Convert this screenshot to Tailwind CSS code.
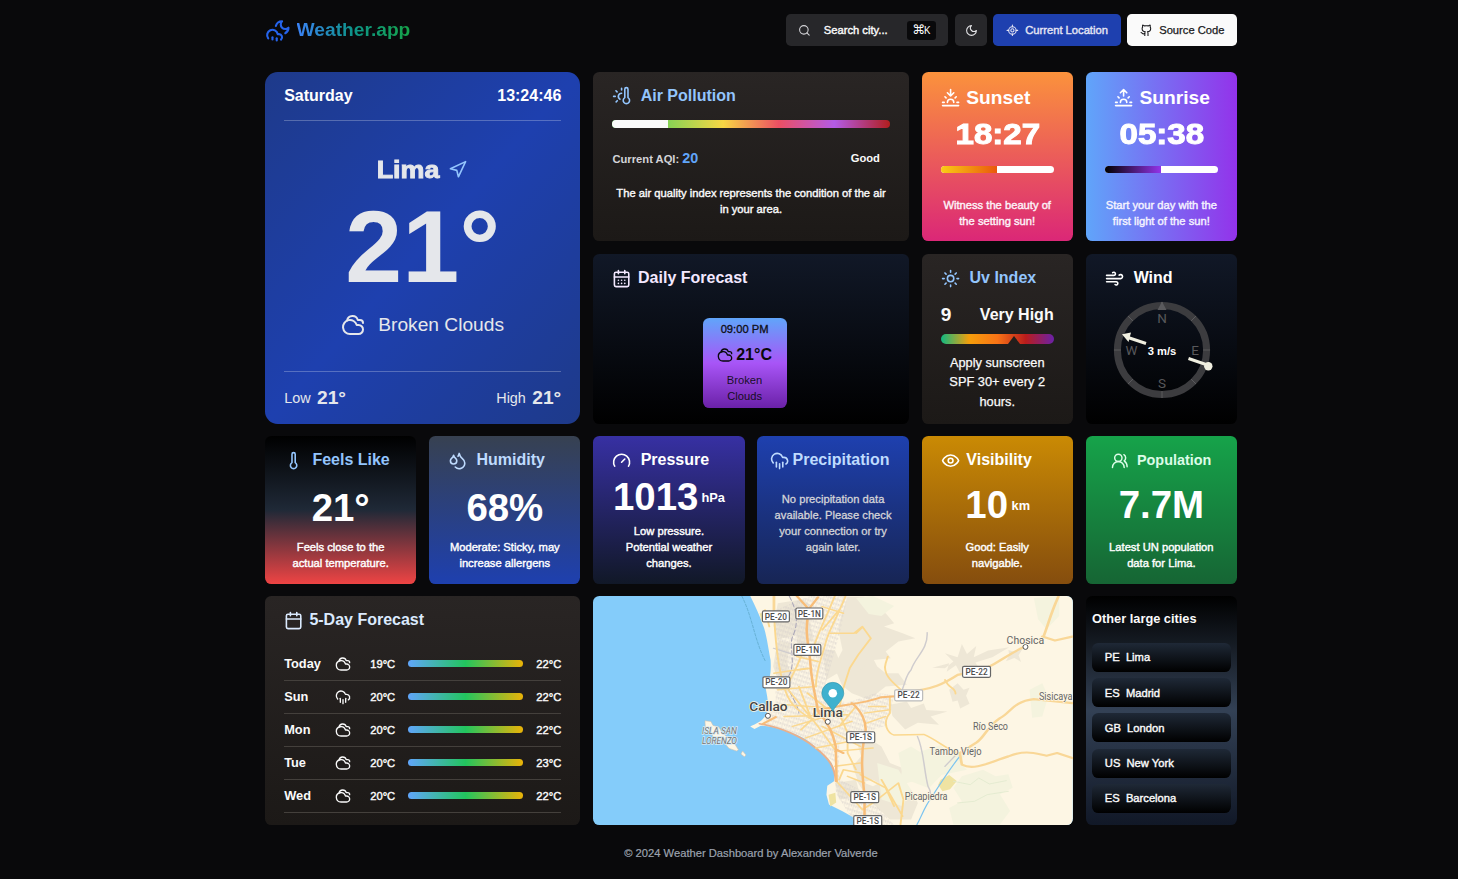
<!DOCTYPE html>
<html lang="en" class="text-[12.8px]">
<head>
<meta charset="utf-8">
<title>Weather.app</title>
<script src="https://cdn.jsdelivr.net/npm/@tailwindcss/browser@4"></script>
</head>
<body class="h-[879px] overflow-hidden bg-[#09090b] font-['Liberation_Sans',Arial,sans-serif] text-[#fafafa]">
<svg class="hidden">
  <symbol id="logo" viewBox="0 0 24 24"><path d="M10.188 8.5A6 6 0 0 1 16 4a1 1 0 0 0 6 6 6 6 0 0 1-3 5.197"/><path d="M11 20v2"/><path d="M3 20a5 5 0 1 1 8.9-4H13a3 3 0 0 1 2 5.24"/><path d="M7 19v2"/></symbol>
  <symbol id="cloudy" viewBox="0 0 24 24"><path d="M17.5 21H9a7 7 0 1 1 6.71-9h1.79a4.5 4.5 0 1 1 0 9Z"/><path d="M22 10a3 3 0 0 0-3-3h-2.207a5.502 5.502 0 0 0-10.702.5"/></symbol>
  <symbol id="rain" viewBox="0 0 24 24"><path d="M4 14.899A7 7 0 1 1 15.71 8h1.79a4.5 4.5 0 0 1 2.5 8.242"/><path d="M16 14v6"/><path d="M8 14v6"/><path d="M12 16v6"/></symbol>
  <symbol id="thermo-sun" viewBox="0 0 24 24"><path d="M12 9a4 4 0 0 0-2 7.5"/><path d="M12 3v2"/><path d="m6.6 18.4-1.4 1.4"/><path d="M20 4v10.54a4 4 0 1 1-4 0V4a2 2 0 0 1 4 0Z"/><path d="M4 13H2"/><path d="M6.34 7.34 4.93 5.93"/></symbol>
  <symbol id="thermo" viewBox="0 0 24 24"><path d="M14 4v10.54a4 4 0 1 1-4 0V4a2 2 0 0 1 4 0Z"/></symbol>
  <symbol id="cal" viewBox="0 0 24 24"><path d="M8 2v4M16 2v4M3 10h18"/><rect x="3" y="4" width="18" height="18" rx="2"/></symbol>
  <symbol id="cal-days" viewBox="0 0 24 24"><path d="M8 2v4M16 2v4M3 10h18M8 14h.01M12 14h.01M16 14h.01M8 18h.01M12 18h.01M16 18h.01"/><rect x="3" y="4" width="18" height="18" rx="2"/></symbol>
  <symbol id="sunset" viewBox="0 0 24 24"><path d="M12 10V2M4.93 10.93l1.41 1.41M2 18h2M20 18h2M19.07 10.93l-1.41 1.41M22 22H2M16 6l-4 4-4-4M16 18a4 4 0 0 0-8 0"/></symbol>
  <symbol id="sunrise" viewBox="0 0 24 24"><path d="M12 2v8M4.93 10.93l1.41 1.41M2 18h2M20 18h2M19.07 10.93l-1.41 1.41M22 22H2M8 6l4-4 4 4M16 18a4 4 0 0 0-8 0"/></symbol>
  <symbol id="sun" viewBox="0 0 24 24"><circle cx="12" cy="12" r="4"/><path d="M12 2v2M12 20v2M4.93 4.93l1.41 1.41M17.66 17.66l1.41 1.41M2 12h2M20 12h2M6.34 17.66l-1.41 1.41M19.07 4.93l-1.41 1.41"/></symbol>
  <symbol id="wind" viewBox="0 0 24 24"><path d="M17.7 7.7a2.5 2.5 0 1 1 1.8 4.3H2"/><path d="M9.6 4.6A2 2 0 1 1 11 8H2"/><path d="M12.6 19.4A2 2 0 1 0 14 16H2"/></symbol>
  <symbol id="drops" viewBox="0 0 24 24"><path d="M7 16.3c2.2 0 4-1.83 4-4.05 0-1.16-.57-2.26-1.71-3.19S7.29 6.75 7 5.3c-.29 1.45-1.14 2.84-2.29 3.76S3 11.1 3 12.25c0 2.22 1.8 4.05 4 4.05z"/><path d="M12.56 6.6A10.97 10.97 0 0 0 14 3.02c.5 2.5 2 4.9 4 6.5s3 3.5 3 5.5a6.98 6.98 0 0 1-11.91 4.97"/></symbol>
  <symbol id="gauge" viewBox="0 0 24 24"><path d="m12 14 4-4"/><path d="M3.34 19a10 10 0 1 1 17.32 0"/></symbol>
  <symbol id="eye" viewBox="0 0 24 24"><path d="M2 12s3-7 10-7 10 7 10 7-3 7-10 7-10-7-10-7Z"/><circle cx="12" cy="12" r="3"/></symbol>
  <symbol id="users" viewBox="0 0 24 24"><path d="M18 21a8 8 0 0 0-16 0"/><circle cx="10" cy="8" r="5"/><path d="M22 20c0-3.37-2-6.5-4-8a5 5 0 0 0-.45-8.3"/></symbol>
  <symbol id="nav" viewBox="0 0 24 24"><path d="M3 11 22 2 13 21 11 13Z"/></symbol>
  <symbol id="search" viewBox="0 0 24 24"><circle cx="11" cy="11" r="8"/><path d="m21 21-4.3-4.3"/></symbol>
  <symbol id="moon" viewBox="0 0 24 24"><path d="M12 3a6 6 0 0 0 9 9 9 9 0 1 1-9-9Z"/></symbol>
  <symbol id="locate" viewBox="0 0 24 24"><path d="M2 12h3M19 12h3M12 2v3M12 19v3"/><circle cx="12" cy="12" r="7"/><circle cx="12" cy="12" r="3"/></symbol>
  <symbol id="github" viewBox="0 0 24 24"><path d="M15 22v-4a4.8 4.8 0 0 0-1-3.5c3 0 6-2 6-5.5.08-1.25-.27-2.48-1-3.5.28-1.15.28-2.35 0-3.5 0 0-1 0-3 1.5-2.64-.5-5.36-.5-8 0C6 2 5 2 5 2c-.3 1.15-.3 2.35 0 3.5A5.403 5.403 0 0 0 4 9c0 3.5 3 5.5 6 5.5-.39.49-.68 1.05-.85 1.65-.17.6-.22 1.23-.15 1.85v4"/><path d="M9 18c-4.51 2-5-2-7-2"/></symbol>
</svg>

<div class="ml-[265px] w-[972px]">
  <header class="flex h-[72px] items-start justify-between pt-[14px]">
    <div class="flex h-8 items-center pt-1.5">
      <svg class="mt-[2px] size-[25.6px] fill-none stroke-[#2563eb] stroke-2" stroke-linecap="round" stroke-linejoin="round"><use href="#logo"/></svg>
      <span class="ml-[6px] bg-[linear-gradient(to_right,#3b82f6,#0d9488_50%,#16a34a)] bg-clip-text text-2xl leading-6 font-bold text-transparent">Weather.app</span>
    </div>
    <div class="flex h-[32px] text-sm [-webkit-text-stroke:0.4px]">
      <div class="flex w-[162px] items-center rounded-md bg-[#27272a] pl-[12px]">
        <svg class="size-[12.8px] fill-none stroke-[#d4d4d8] stroke-2" stroke-linecap="round" stroke-linejoin="round"><use href="#search"/></svg>
        <span class="ml-[13px]">Search city...</span>
        <span class="mt-px ml-[19px] flex h-[19px] w-[29px] items-center justify-center rounded bg-[#09090b] [-webkit-text-stroke:0]"><span class="font-['DejaVu_Sans',sans-serif] text-[12.8px]">⌘</span><span class="-ml-px font-['Noto_Sans',sans-serif] text-[10.5px]">K</span></span>
      </div>
      <div class="ml-[7px] flex w-[32px] items-center justify-center rounded-md bg-[#27272a]">
        <svg class="mt-px size-[13px] fill-none stroke-[#e4e4e7] stroke-2" stroke-linecap="round" stroke-linejoin="round"><use href="#moon"/></svg>
      </div>
      <div class="ml-[6px] flex w-[128px] items-center rounded-md bg-[#1e40af] pl-[13px] text-[#e4e4f4]">
        <svg class="size-[12.8px] fill-none stroke-current stroke-2" stroke-linecap="round" stroke-linejoin="round"><use href="#locate"/></svg>
        <span class="ml-[6.4px]">Current Location</span>
      </div>
      <div class="ml-[6px] flex w-[110px] items-center rounded-md bg-[#fafafa] pl-[13px] text-[#18181b] [-webkit-text-stroke:0.25px]">
        <svg class="size-[12.8px] fill-none stroke-current stroke-2" stroke-linecap="round" stroke-linejoin="round"><use href="#github"/></svg>
        <span class="ml-[6.4px]">Source Code</span>
      </div>
    </div>
  </header>

  <main class="grid grid-cols-6 grid-rows-[169.4px_169.4px_147.2px_228.6px] gap-4">
    <!-- Current weather -->
    <section class="col-span-2 row-span-2 flex flex-col rounded-2xl bg-[linear-gradient(to_bottom_right,#1e3a8a,#1e40af,#1e3a8a)] px-6 text-[#e5e7eb]">
      <div class="flex h-[49px] items-center justify-between border-b border-white/25 pt-px text-xl font-bold text-white"><span>Saturday</span><span>13:24:46</span></div>
      <div class="mt-[34.5px] flex h-[30px] items-center justify-center gap-[12px] pl-[2px]">
        <span class="origin-center scale-x-112 text-[24px] leading-[30px] font-bold [-webkit-text-stroke:0.9px]">Lima</span>
        <svg class="-mt-px size-[19.2px] fill-none stroke-[#93c5fd] stroke-2" stroke-linecap="round" stroke-linejoin="round"><use href="#nav"/></svg>
      </div>
      <div class="mt-[10.6px] flex h-[102px] items-center justify-center text-9xl leading-none font-bold">21°</div>
      <div class="mt-[14.7px] flex h-[24px] items-center justify-center gap-[12.8px] text-2xl">
        <svg class="size-[24px] fill-none stroke-current stroke-2" stroke-linecap="round" stroke-linejoin="round"><use href="#cloudy"/></svg><span>Broken Clouds</span>
      </div>
      <div class="mt-[34px] flex h-[53px] items-center justify-between border-t border-white/25">
        <div class="flex items-center gap-[6.4px]"><span class="pt-px text-lg">Low</span><span class="text-2xl font-bold">21°</span></div>
        <div class="flex items-center gap-[6.4px]"><span class="pt-px text-lg">High</span><span class="text-2xl font-bold">21°</span></div>
      </div>
    </section>

    <!-- Air pollution -->
    <section class="col-span-2 flex flex-col rounded-lg bg-[linear-gradient(#292524,#1c1917)] px-6 pt-[12px]">
      <div class="flex h-[24px] items-center gap-[9px] text-xl font-bold text-[#93c5fd]">
        <svg class="size-6 fill-none stroke-current stroke-2" stroke-linecap="round" stroke-linejoin="round"><use href="#thermo-sun"/></svg>Air Pollution
      </div>
      <div class="mt-[12px] flex h-[8px] overflow-hidden rounded-full bg-[linear-gradient(to_right,#4ade50,#86d255_20%,#f7d644_40%,#eb4f63_60%,#b35be6_80%,#b01e1e)]"><div class="w-[56px] bg-[#fafafa]"></div></div>
      <div class="mt-[20px] flex h-[20px] items-center justify-between pr-[9.6px] text-sm font-bold"><span class="text-[#d4d4d8]">Current AQI: <span class="text-lg leading-5 text-[#60a5fa]">20</span></span><span>Good</span></div>
      <p class="mt-[17.3px] text-center text-sm leading-[16px] [-webkit-text-stroke:0.4px]">The air quality index represents the condition of the air in your area.</p>
    </section>

    <!-- Sunset -->
    <section class="flex flex-col rounded-lg bg-[linear-gradient(#fb923c,#db2777)] px-6 pt-[14px] text-white">
      <div class="flex h-[24px] items-center gap-[6.4px] text-2xl font-bold"><svg class="size-6 fill-none stroke-current stroke-2" stroke-linecap="round" stroke-linejoin="round"><use href="#sunset"/></svg>Sunset</div>
      <div class="mt-[8px] flex h-[32px] items-center justify-center pl-px"><span class="scale-x-115 text-4xl leading-none font-bold [-webkit-text-stroke:1px]">18:27</span></div>
      <div class="mt-[16px] flex h-[7px] overflow-hidden rounded-full bg-white"><div class="w-1/2 bg-[linear-gradient(to_right,#facc15,#ea580c)]"></div></div>
      <p class="-mx-1 mt-[24.3px] text-center text-sm leading-[16px] text-[#fdf2f8] [-webkit-text-stroke:0.4px]">Witness the beauty of<br>the setting sun!</p>
    </section>

    <!-- Sunrise -->
    <section class="flex flex-col rounded-lg bg-[linear-gradient(to_right,#60a5fa,#9333ea)] px-6 pt-[14px] text-white">
      <div class="flex h-[24px] items-center justify-center gap-[6.4px] pl-px text-2xl font-bold"><svg class="size-6 fill-none stroke-current stroke-2" stroke-linecap="round" stroke-linejoin="round"><use href="#sunrise"/></svg>Sunrise</div>
      <div class="mt-[8px] flex h-[32px] items-center justify-center"><span class="scale-x-115 text-4xl leading-none font-bold [-webkit-text-stroke:1px]">05:38</span></div>
      <div class="mt-[16px] flex h-[7px] overflow-hidden rounded-full bg-white"><div class="w-1/2 bg-[linear-gradient(to_right,#000,#9333ea)]"></div></div>
      <p class="-mx-1 mt-[24.3px] text-center text-sm leading-[16px] text-[#f5f3ff] [-webkit-text-stroke:0.4px]">Start your day with the<br>first light of the sun!</p>
    </section>

    <!-- Daily forecast -->
    <section class="col-span-2 flex flex-col rounded-lg bg-[linear-gradient(#111827,#000)] px-6 pt-[12px]">
      <div class="flex h-[24px] items-center gap-[6.4px] text-xl font-bold text-[#f3e8ff]">
        <svg class="size-6 fill-none stroke-current stroke-2" stroke-linecap="round" stroke-linejoin="round"><use href="#cal-days"/></svg>Daily Forecast
      </div>
      <div class="mt-[27.8px] mr-[12.8px] flex h-[90px] w-[84px] flex-col items-center self-center rounded-lg bg-[linear-gradient(#60a5fa,#a855f7_50%,#6b21a8)] text-sm text-[#09090b]">
        <span class="mt-[3px] leading-[16px] text-[#09090b]/90 [-webkit-text-stroke:0.4px]">09:00 PM</span>
        <div class="mt-[8px] flex h-[20px] items-center gap-[3px] text-xl font-bold"><svg class="size-[16px] fill-none stroke-current stroke-2" stroke-linecap="round" stroke-linejoin="round"><use href="#cloudy"/></svg>21°C</div>
        <span class="mt-[7px] text-center leading-[16px] text-[#09090b]/90">Broken<br>Clouds</span>
      </div>
    </section>

    <!-- UV index -->
    <section class="flex flex-col rounded-lg bg-[linear-gradient(#292524,#1c1917)] px-6 pt-[12px]">
      <div class="flex h-[24px] items-center gap-[9.6px] text-xl font-bold text-[#93c5fd]"><svg class="size-6 fill-none stroke-current stroke-2" stroke-linecap="round" stroke-linejoin="round"><use href="#sun"/></svg>Uv Index</div>
      <div class="mt-[13px] flex h-[24px] items-center justify-between text-xl font-bold"><span class="text-2xl">9</span><span>Very High</span></div>
      <div class="mt-[6.8px] flex h-[10px] items-end rounded-full bg-[linear-gradient(to_right,#10b981,#f59e0b_25%,#f97316_50%,#b91c1c_75%,#6b21a8)]"><svg class="ml-[67px] h-[8px] w-[12px]" viewBox="0 0 12 8"><path d="M0 8 6 0l6 8z" fill="#221e1c"/></svg></div>
      <p class="mt-[9px] text-center text-base leading-[19.4px] [-webkit-text-stroke:0.25px]">Apply sunscreen SPF 30+ every 2 hours.</p>
    </section>

    <!-- Wind -->
    <section class="flex flex-col rounded-lg bg-[linear-gradient(#111827,#000)] px-6 pt-[12px]">
      <div class="flex h-[24px] items-center gap-[9.6px] text-xl font-bold text-white"><svg class="size-6 fill-none stroke-current stroke-2" stroke-linecap="round" stroke-linejoin="round"><use href="#wind"/></svg>Wind</div>
      <svg class="mt-[9.3px] ml-px h-[102px] w-[104px] self-center" viewBox="-52 -51 104 102" text-anchor="middle">
        <circle r="44.6" fill="none" stroke="#3c3c3f" stroke-width="7"/>
        <g stroke="#5a5a5d" stroke-width="1"><path d="M0-48v7M0 41v7M-48 0h7M41 0h7M-34-34l5 5M34-34l-5 5M-34 34l5-5M34 34l-5-5"/></g>
        <path d="M0-48.500-4.500-40h9z" fill="#5a5a5d"/>
        <g class="font-['Roboto',sans-serif] text-[13.5px]" fill="#58585b"><text y="-27.500">N</text><text y="38">S</text><text x="-30.500" y="4.700">W</text><text x="33" y="4.700">E</text></g>
        <g stroke="#f0efe0" fill="#f0efe0"><path d="M-16-6.500-34-12.500M26.500 8.500 44 14.500" stroke-width="3"/><path d="M-40-15.700-31-17.500-33.500-8z" stroke="none"/><circle cx="46.300" cy="16.300" r="4.200" stroke="none"/></g>
        <text y="4.500" class="text-[11.2px] font-bold" fill="#fff">3 m/s</text>
      </svg>
    </section>

    <!-- Feels like -->
    <section class="flex flex-col rounded-lg bg-[linear-gradient(#000,#1f2937_50%,#ef4444)] px-6 pt-[12px] text-white">
      <div class="flex h-[24px] items-center gap-[9px] text-xl font-bold text-[#93c5fd]"><svg class="size-6 fill-none stroke-current stroke-2" stroke-linecap="round" stroke-linejoin="round"><use href="#thermo"/></svg>Feels Like</div>
      <div class="mt-[16px] flex h-[40px] items-center justify-center text-5xl leading-none font-bold">21°</div>
      <p class="-mx-2 mt-[11px] text-center text-sm leading-[16px] [-webkit-text-stroke:0.4px]">Feels close to the<br>actual temperature.</p>
    </section>

    <!-- Humidity -->
    <section class="flex flex-col rounded-lg bg-[linear-gradient(#374151,#1e40af)] px-6 pt-[12px] text-white">
      <div class="flex h-[24px] items-center gap-[9px] text-xl font-bold text-[#bfdbfe]"><svg class="size-6 fill-none stroke-current stroke-2" stroke-linecap="round" stroke-linejoin="round"><use href="#drops"/></svg>Humidity</div>
      <div class="mt-[16px] flex h-[40px] items-center justify-center text-5xl leading-none font-bold">68%</div>
      <p class="-mx-2 mt-[11px] text-center text-sm leading-[16px] [-webkit-text-stroke:0.4px]">Moderate: Sticky, may<br>increase allergens</p>
    </section>

    <!-- Pressure -->
    <section class="flex flex-col rounded-lg bg-[linear-gradient(#3730a3,#111827)] px-6 pt-[12px] text-white">
      <div class="flex h-[24px] items-center gap-[9px] text-xl font-bold"><svg class="size-6 fill-none stroke-current stroke-2" stroke-linecap="round" stroke-linejoin="round"><use href="#gauge"/></svg>Pressure</div>
      <div class="-mx-2 mt-[5px] flex h-[40px] items-center justify-center gap-[3px] text-5xl leading-none font-bold">1013<span class="text-base">hPa</span></div>
      <p class="mt-[6px] text-center text-sm leading-[16px] [-webkit-text-stroke:0.4px]">Low pressure.<br>Potential weather<br>changes.</p>
    </section>

    <!-- Precipitation -->
    <section class="flex flex-col rounded-lg bg-[linear-gradient(#1e40af,#172554)] px-[12.8px] pt-[12px] text-[#d4d4d8]">
      <div class="flex h-[24px] items-center gap-[3.2px] text-xl font-bold text-[#bfdbfe]"><svg class="size-6 shrink-0 fill-none stroke-current stroke-2" stroke-linecap="round" stroke-linejoin="round"><use href="#rain"/></svg>Precipitation</div>
      <p class="mt-[19px] text-center text-sm leading-[16px] [-webkit-text-stroke:0.3px]">No precipitation data<br>available. Please check<br>your connection or try<br>again later.</p>
    </section>

    <!-- Visibility -->
    <section class="flex flex-col rounded-lg bg-[linear-gradient(#ca8a04,#854d0e)] px-6 pt-[12px] text-white">
      <div class="flex h-[24px] items-center gap-[6.4px] text-xl font-bold"><svg class="size-6 fill-none stroke-current stroke-2" stroke-linecap="round" stroke-linejoin="round"><use href="#eye"/></svg>Visibility</div>
      <div class="mt-[12.500px] flex h-[40px] items-center justify-center gap-[3.5px] pl-px text-5xl leading-none font-bold">10<span class="pt-px text-base">km</span></div>
      <p class="mt-[14.5px] text-center text-sm leading-[16px] [-webkit-text-stroke:0.4px]">Good: Easily<br>navigable.</p>
    </section>

    <!-- Population -->
    <section class="flex flex-col rounded-lg bg-[linear-gradient(#16a34a,#166534)] px-6 pt-[12px] text-white">
      <div class="flex h-[24px] items-center justify-center gap-[8px] text-lg font-bold text-[#dcfce7]"><svg class="size-[17.6px] fill-none stroke-current stroke-2" stroke-linecap="round" stroke-linejoin="round"><use href="#users"/></svg>Population</div>
      <div class="mt-[12.5px] flex h-[40px] items-center justify-center text-5xl leading-none font-bold">7.7M</div>
      <p class="mt-[14.5px] text-center text-sm leading-[16px] [-webkit-text-stroke:0.4px]">Latest UN population<br>data for Lima.</p>
    </section>

    <!-- Five day forecast -->
    <section class="col-span-2 flex flex-col rounded-lg bg-[linear-gradient(#292524,#1c1917)] px-6 pt-[12px]">
      <div class="mb-[15.6px] flex h-[24px] items-center gap-[6px] text-xl font-bold text-[#dbeafe]"><svg class="size-6 fill-none stroke-current stroke-2" stroke-linecap="round" stroke-linejoin="round"><use href="#cal"/></svg>5-Day Forecast</div>
      <div class="flex h-[33px] items-center border-b border-[#44403c] text-sm"><span class="w-[51px] text-base font-bold">Today</span><svg class="size-[16px] fill-none stroke-current stroke-2" stroke-linecap="round" stroke-linejoin="round"><use href="#cloudy"/></svg><span class="w-[44px] text-right [-webkit-text-stroke:0.4px]">19°C</span><div class="ml-[13px] h-[7px] w-[115px] rounded-full bg-[linear-gradient(to_right,#60a5fa,#22c55e,#eab308)]"></div><span class="flex-1 text-right [-webkit-text-stroke:0.4px]">22°C</span></div>
      <div class="flex h-[33px] items-center border-b border-[#44403c] text-sm"><span class="w-[51px] text-base font-bold">Sun</span><svg class="size-[16px] fill-none stroke-current stroke-2" stroke-linecap="round" stroke-linejoin="round"><use href="#rain"/></svg><span class="w-[44px] text-right [-webkit-text-stroke:0.4px]">20°C</span><div class="ml-[13px] h-[7px] w-[115px] rounded-full bg-[linear-gradient(to_right,#60a5fa,#22c55e,#eab308)]"></div><span class="flex-1 text-right [-webkit-text-stroke:0.4px]">22°C</span></div>
      <div class="flex h-[33px] items-center border-b border-[#44403c] text-sm"><span class="w-[51px] text-base font-bold">Mon</span><svg class="size-[16px] fill-none stroke-current stroke-2" stroke-linecap="round" stroke-linejoin="round"><use href="#cloudy"/></svg><span class="w-[44px] text-right [-webkit-text-stroke:0.4px]">20°C</span><div class="ml-[13px] h-[7px] w-[115px] rounded-full bg-[linear-gradient(to_right,#60a5fa,#22c55e,#eab308)]"></div><span class="flex-1 text-right [-webkit-text-stroke:0.4px]">22°C</span></div>
      <div class="flex h-[33px] items-center border-b border-[#44403c] text-sm"><span class="w-[51px] text-base font-bold">Tue</span><svg class="size-[16px] fill-none stroke-current stroke-2" stroke-linecap="round" stroke-linejoin="round"><use href="#cloudy"/></svg><span class="w-[44px] text-right [-webkit-text-stroke:0.4px]">20°C</span><div class="ml-[13px] h-[7px] w-[115px] rounded-full bg-[linear-gradient(to_right,#60a5fa,#22c55e,#eab308)]"></div><span class="flex-1 text-right [-webkit-text-stroke:0.4px]">23°C</span></div>
      <div class="flex h-[33px] items-center border-b border-[#44403c] text-sm"><span class="w-[51px] text-base font-bold">Wed</span><svg class="size-[16px] fill-none stroke-current stroke-2" stroke-linecap="round" stroke-linejoin="round"><use href="#cloudy"/></svg><span class="w-[44px] text-right [-webkit-text-stroke:0.4px]">20°C</span><div class="ml-[13px] h-[7px] w-[115px] rounded-full bg-[linear-gradient(to_right,#60a5fa,#22c55e,#eab308)]"></div><span class="flex-1 text-right [-webkit-text-stroke:0.4px]">22°C</span></div>
    </section>

    <!-- Map -->
    <section class="col-span-3 overflow-hidden rounded-lg bg-[#84ccfa]">
      <svg class="h-full w-full" viewBox="0 0 480 229" fill="none">
        <defs>
          <pattern id="streets" width="5" height="5" patternUnits="userSpaceOnUse" patternTransform="scale(2.2 2.8) rotate(18)"><path d="M0 1H5M1 0V5M3.500 0V3" stroke="#d6d0cc" stroke-width=".5"/></pattern>
        </defs>
        <!-- terrain: drawn on a 1132x687 plane, squeezed to the card -->
        <g transform="scale(.424 .3333) translate(-19 -18)">
          <path d="M390 18C402 50 412 75 420 105 428 130 432 170 438 210 440 250 436 270 426 292 430 320 436 350 428 372 420 395 405 400 390 410L400 418 415 408C450 410 490 428 520 448 545 470 568 500 582 520 590 540 588 560 588 575L572 588 570 615 576 645 608 665 632 682 640 706H1152V18Z" fill="#fdf6e4"/>
          <path d="M283 393l14 2 5 12 14 5 8 18 12 12 14 14 12 24-4 4-18-8-12-18-18-10-14-16-12-14zM372 484l8 12-4 5-8-8z" fill="#fdf6e4" stroke="#cdbfb0" stroke-width="1.500"/>
          <g fill="#eee7d6">
            <path d="M455 40l60-12 20 20-10 40-30 50-40 10-10-40zM455 150l30 10-8 60 12 40-30 20-15-50z"/>
            <path d="M620 20l40 0 0 30 50 20 20 30-24 10 44 20 30 15-40 10-30 30 12 20-40 5 6 40-40-6-10 36-30 10-20-60 20-50-10-60 10-50z"/>
            <path d="M640 250l20-20 10-50 20 50 20 20 30 0 20 35-50 5-40 40-40-20-20-20zM720 345l40-10 10 20 30-14 6 20 50 4-40 15 20 25-50-6-30 20-30-40zM850 235l20-20-20-25 30 12 10-40 12 30 22-24-6 34 34-20 50-10-40 30-40 16 12 24-30-16-14 34-14-34-22 20 6-26-40 14zM860 300l20-20 14 20 14-6-8 24 8 24-22 14-6-24-12 4z"/>
            <path d="M640 450l24-10 36 30 20 50 40 20-20 30 14 20-34 10-40-30-34 10-14-50 20-30zM640 570l40 20 30-20 40 50 20-20 16 40-16 50h-50l-50-60z"/>
            <path d="M500 90l30 0 10 60-40 20zM560 180l30 0 20 60-40 30zM590 580l50-10 10 50-50 10zM1000 180l14 6 20-10-10 20 6 20-16-12-20 10 8-18z"/>
          </g>
          <g fill="#f4f3de">
            <path d="M1060 24l60-6 0 60-30 40-20-30zM640 24l40-6 50 30-30 30-30-6zM740 490l30-20 20 16 50-20 20 30 40-6-14 30 16 20-60 16-30 40-40-20-30 10 6-40zM890 560l50-20 30 20 30-6 10 40-30 20 24 50-24 41h-110l-10-50 30-20-20-40z"/>
            <path d="M1050 300l30-20 14 40-14 60-24 4zM690 520l50 20 30 60-20 50-50-20z"/>
          </g>
          <path d="M840 570l20-14 18 18-16 25-18 6-10-20zM575 615l16-6 2 30-14 12zM412 70l12 0 4 20-10 8z" fill="#efe3a2"/>
          <path d="M450 60l80-42h90l-20 120-20 90-20 90 60 20 70-30 40 10-20 90-50 20-60 30 0 110 60 40 70 98h-90L592 610V520L510 440 420 400l30-60 0-200z" fill="url(#streets)"/>
        </g>
        <!-- rivers, boundaries -->
        <g transform="scale(.424 .3333) translate(-19 -18)" stroke-linejoin="round" stroke-linecap="round">
          <path d="M885 500C860 540 840 580 820 620 800 655 795 680 784 705" stroke="#7cc4f0" stroke-width="3"/>
          <path d="M370 18C395 80 400 150 425 212" stroke="#5da9c9" stroke-width="2" stroke-dasharray="8 5"/>
          <path d="M482 18C500 60 505 100 490 140 480 170 500 220 480 260 470 300 500 330 505 370" stroke="#aaa6b8" stroke-width="2.500" stroke-dasharray="14 7"/>
          <path d="M808 128C810 180 780 200 770 240 755 260 758 280 745 310M785 440C800 480 800 540 810 590 820 610 815 620 815 625M445 175l50 20M880 490l-30 40" stroke="#cfccce" stroke-width="3.500"/>
          <path d="M870 575l40 10 20-20 25 18 40-10M880 640l40-5 30-20 50-10" stroke="#dfe8cd" stroke-width="2"/>
          <path d="M412 402C470 415 510 440 545 475 575 505 590 530 592 575" stroke="#e9b08c" stroke-width="5"/>
        </g>
        <!-- minor roads -->
        <g transform="scale(.424 .3333) translate(-19 -18)" stroke="#fbd88f" stroke-width="4.500" stroke-linejoin="round" stroke-linecap="round">
          <path d="M447 90C450 160 455 230 470 290 480 340 500 360 530 385M425 60l10 50M446 250l80-15M455 300l90-10M475 345l110 10M470 380l150-5M490 410l120-45M520 445l110-50M545 475l120-30M590 485l90-10M590 530l60-10"/>
          <path d="M615 18C600 70 580 110 570 150 560 200 545 240 545 290M590 18C570 80 550 130 540 170M575 130l60 0 20-20 20 35-30 50-20 40-15 60-8 50M640 130l15-18"/>
          <path d="M560 50l50 20M600 60l-40 60M500 200l50 15M505 240l30-5M520 170l-20 60-20 50M525 310l60 60M560 360l-50 60M600 370l20 60 0 60 20 50M640 350l-40 60M480 300l70 110 40 70M505 290l30 100M560 410l90 60M670 350l40 0M660 370l60-10M665 400l45-20"/>
          <path d="M710 220C700 260 740 290 750 305M710 220l5-20M720 320V370C700 400 715 430 730 436L800 434C830 450 850 475 880 490M850 270C860 300 875 290 875 312"/>
          <path d="M594 575L655 660 680 640 740 580 752 630 745 705M700 570l50 110M620 560l40 20M650 555l60 40 20 55M600 570l10-30 40 10"/>
        </g>
        <g transform="scale(.424 .3333) translate(-19 -18)" stroke="#f9d797" stroke-width="6.500" stroke-linejoin="round" stroke-linecap="round">
          <path d="M446 18V90M760 305C820 300 850 280 880 255L940 240C990 210 1000 190 1040 170M1083 140C1095 100 1100 70 1118 20M1080 140L1110 152 1151 140"/>
          <path d="M1151 340L1060 328C1010 335 1005 370 980 385 950 410 945 440 925 458L885 490 890 525C920 545 960 515 1000 500 1040 480 1060 490 1090 498L1115 490 1151 505"/>
        </g>
        <!-- highways -->
        <g transform="scale(.424 .3333) translate(-19 -18)" stroke="#f8bd78" stroke-width="6" stroke-linejoin="round" stroke-linecap="round">
          <path d="M500 18L530 60C515 120 530 170 532 220 535 280 545 320 550 365 575 400 585 430 592 470L594 575M530 55L550 22M550 365C600 340 640 350 700 322L750 318M630 340C650 360 670 400 660 440 650 500 655 560 660 620V705"/>
          <path d="M594 480L610 490M420 402l30-20"/>
        </g>
        <!-- road shields -->
        <g fill="#fff" stroke="#666" stroke-width="1.200">
          <rect x="169.500" y="15" width="27" height="11" rx="1.500"/><rect x="203" y="12" width="27" height="11" rx="1.500"/><rect x="201" y="48.500" width="27" height="11" rx="1.500"/><rect x="170" y="81" width="27" height="11" rx="1.500"/><rect x="370" y="70.500" width="28" height="11" rx="1.500"/><rect x="302" y="94" width="28" height="11" rx="1.500" stroke="#bbb"/><rect x="254" y="136" width="28" height="11" rx="1.500"/><rect x="258" y="196" width="28" height="11" rx="1.500"/><rect x="261" y="220" width="28" height="11" rx="1.500"/>
        </g>
        <g class="font-['Roboto',sans-serif] text-[8.3px] font-medium" fill="#4d4d4d" text-anchor="middle">
          <text x="183" y="23.800">PE-20</text><text x="216.500" y="20.800">PE-1N</text><text x="214.500" y="57">PE-1N</text><text x="183.500" y="89.500">PE-20</text><text x="384" y="79">PE-22</text><text x="316" y="102.500">PE-22</text><text x="268" y="144.500">PE-1S</text><text x="272" y="204.500">PE-1S</text><text x="275" y="228">PE-1S</text>
        </g>
        <!-- places -->
        <g fill="#fff" stroke="#555" stroke-width="1"><circle cx="175" cy="120" r="2.500"/><circle cx="235" cy="126" r="2.500"/><circle cx="433" cy="51" r="2.500"/></g>
        <g class="font-['Roboto',sans-serif]" fill="#666" stroke="#fdf6e4" stroke-width="1.500" paint-order="stroke" text-anchor="middle">
          <g class="text-[13.7px] font-medium" fill="#454545"><text x="175.500" y="115.500">Callao</text><text x="235" y="121.500">Lima</text></g>
          <g class="text-[10.5px]"><text x="433" y="48">Chosica</text><text x="398" y="134.500" textLength="35" lengthAdjust="spacingAndGlyphs">Río Seco</text><text x="363" y="159.500" textLength="52" lengthAdjust="spacingAndGlyphs">Tambo Viejo</text><text x="333.500" y="204" textLength="43" lengthAdjust="spacingAndGlyphs">Picapiedra</text><text x="446.500" y="103.700" text-anchor="start" textLength="33.500" lengthAdjust="spacingAndGlyphs">Sisicaya</text></g>
          <g class="text-[8.5px] italic" fill="#777" stroke="#d5e8f2"><text x="126.500" y="138.500" textLength="35">ISLA SAN</text><text x="126.500" y="148" textLength="35">LORENZO</text></g>
        </g>
        <path d="M240 115.500C236 108 229 104 229 97.500A11 11 0 0 1 251 97.500C251 104 244 108 240 115.500Z" fill="#3fb1ce" stroke="#2f93ad" stroke-width=".6"/>
        <circle cx="240" cy="97.500" r="4.300" fill="#fff"/>
      </svg>
    </section>

    <!-- Cities -->
    <section class="flex flex-col rounded-lg bg-[linear-gradient(#000,#334155_50%,#111827)] px-[6.4px] pt-[13px]">
      <h3 class="mb-[13.600px] h-[20px] text-base leading-[20px] font-bold">Other large cities</h3>
      <div class="flex flex-col gap-[6.2px] text-sm [-webkit-text-stroke:0.4px] [word-spacing:3px]">
        <div class="flex h-[29px] items-center rounded-lg bg-[linear-gradient(#1f2937,#000)] pl-[12.8px]">PE Lima</div>
        <div class="flex h-[29px] items-center rounded-lg bg-[linear-gradient(#1f2937,#000)] pl-[12.8px]">ES Madrid</div>
        <div class="flex h-[29px] items-center rounded-lg bg-[linear-gradient(#1f2937,#000)] pl-[12.8px]">GB London</div>
        <div class="flex h-[29px] items-center rounded-lg bg-[linear-gradient(#1f2937,#000)] pl-[12.8px]"><span>US <span class="[word-spacing:0]">New York</span></span></div>
        <div class="flex h-[29px] items-center rounded-lg bg-[linear-gradient(#1f2937,#000)] pl-[12.8px]">ES Barcelona</div>
      </div>
    </section>
  </main>

  <footer class="mt-[20px] text-center text-sm leading-[16px] text-[#9ca3af] [-webkit-text-stroke:0.2px]">© 2024 Weather Dashboard by Alexander Valverde</footer>
</div>
</body>
</html>
